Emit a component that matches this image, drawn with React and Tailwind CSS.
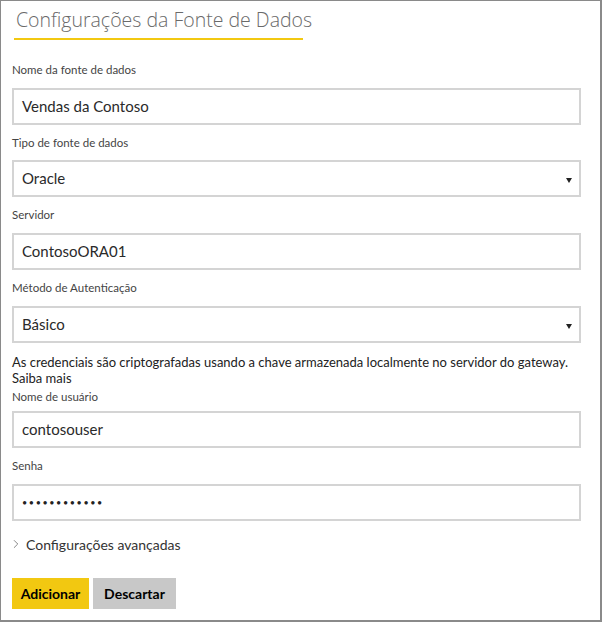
import { ChevronRight } from "lucide-react";

const font = { fontFamily: 'Lato, "Open Sans", "Liberation Sans", sans-serif' };

function Label({ children, className = "" }) {
  return <div className={`h-[16px] leading-[16px] text-[11.5px] text-[#444] ${className}`}>{children}</div>;
}

function Field({ value, select, password }) {
  return (
    <div className="relative flex h-[37px] w-[569px] items-center border-2 border-[#d4d4d4] bg-white pl-[8px]">
      {password ? (
        <span className="text-[9px] tracking-[1.6px] text-[#222]">••••••••••••</span>
      ) : (
        <span className="text-[15px] text-[#2a2a2a]">{value}</span>
      )}
      {select && (
        <svg className="absolute right-[7px] top-[16px]" width="6" height="5" viewBox="0 0 6 5">
          <path d="M0 0 H6 L3 5 Z" fill="#222" />
        </svg>
      )}
    </div>
  );
}

export default function App() {
  return (
    <div
      style={font}
      className="h-[622px] w-[602px] overflow-hidden border-l border-t border-r-2 border-b-2 border-[#8a8a8a] bg-white pl-[11px]"
    >
      {/* 제목 */}
      <div
        style={{ fontFamily: '"Open Sans", sans-serif' }}
        className="pl-[4px] pt-[5px] h-[34px] leading-[28px] text-[19.5px] font-light text-[#6a6a6a]"
      >
        Configurações da Fonte de Dados
      </div>
      <div className="ml-[2px] mt-[3px] h-[2px] w-[289px] bg-[#f2c811]" />

      <div className="mt-[22px]">
        <Label className="mb-[10px]">Nome da fonte de dados</Label>
        <Field value="Vendas da Contoso" />

        <Label className="mt-[10px] mb-[9px]">Tipo de fonte de dados</Label>
        <Field value="Oracle" select />

        <Label className="mt-[10px] mb-[10px]">Servidor</Label>
        <Field value="ContosoORA01" />

        <Label className="mt-[10px] mb-[10px]">Método de Autenticação</Label>
        <Field value="Básico" select />

        {/* 안내 문구 */}
        <div className="mt-[11px] text-[13px] leading-[16px] text-[#222]">
          As credenciais são criptografadas usando a chave armazenada localmente no servidor do gateway.
        </div>
        <div className="text-[13px] leading-[16px] text-[#222]">Saiba mais</div>

        <Label className="mt-[3px] mb-[6px]">Nome de usuário</Label>
        <Field value="contosouser" />

        <Label className="mt-[10px] mb-[10px]">Senha</Label>
        <Field password />

        <div className="mt-[13px] flex h-[20px] items-center gap-[3px] text-[14px] text-[#333]">
          <ChevronRight size={14} strokeWidth={1.2} className="-ml-[3px] text-[#555]" />
          <span>Configurações avançadas</span>
        </div>

        {/* 버튼 */}
        <div className="mt-[24px] flex gap-[4px]">
          <button type="button" className="h-[31px] w-[77px] bg-[#f2c811] text-[14px] font-bold text-black">
            Adicionar
          </button>
          <button type="button" className="h-[31px] w-[83px] bg-[#c8c8c8] text-[14px] font-bold text-black">
            Descartar
          </button>
        </div>
      </div>
    </div>
  );
}
